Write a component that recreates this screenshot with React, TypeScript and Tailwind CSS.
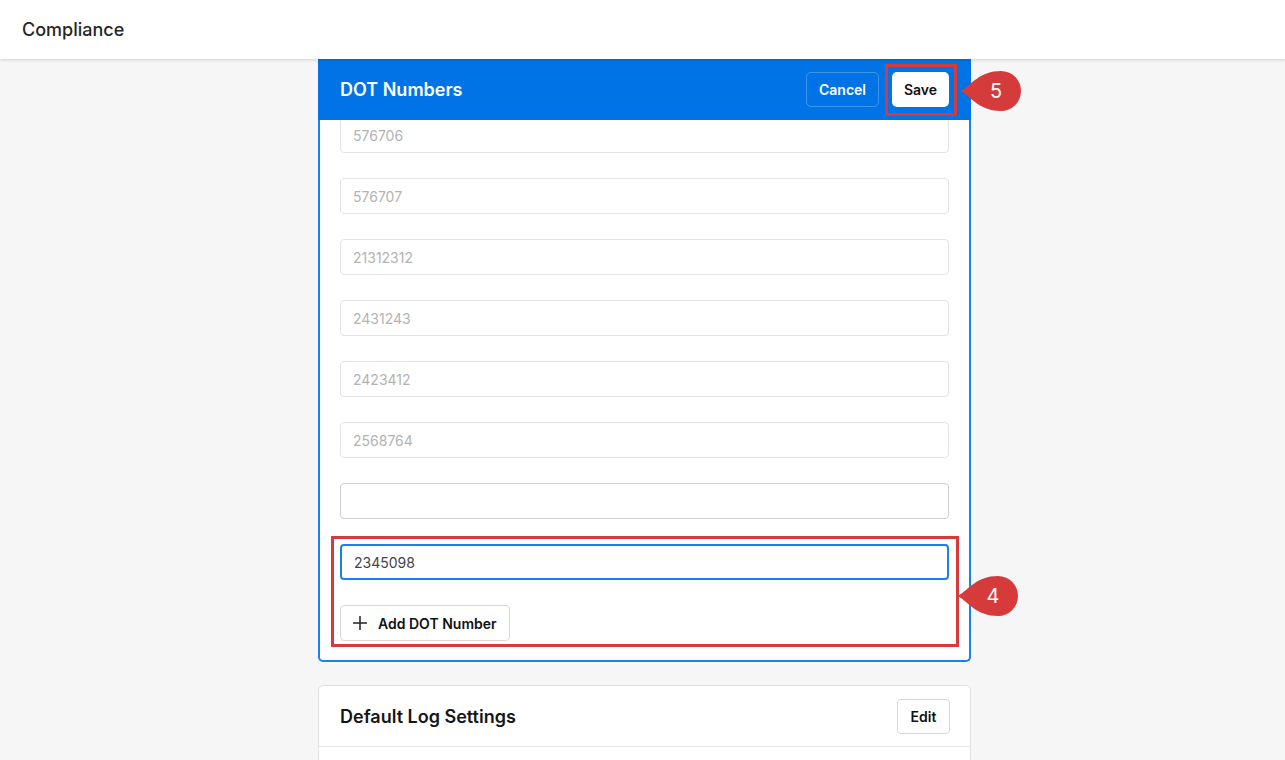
import React from 'react';

const font = { fontFamily: 'Inter, "Noto Sans", sans-serif' };

const savedNumbers = ['576706', '576707', '21312312', '2431243', '2423412', '2568764'];

const Marker: React.FC<{ label: string; className: string }> = ({ label, className }) => (
  <div className={`absolute w-[62px] h-[42px] ${className}`}>
    <svg width="62" height="42" viewBox="0 0 62 42" className="absolute inset-0">
      <path
        d="M1 21 C 12 14, 20 1, 41 1 A20 20 0 1 1 41 41 C 20 41, 12 28, 1 21 Z"
        fill="#d63b3b"
      />
    </svg>
    <span className="absolute left-[17px] w-[38px] top-0 h-[42px] flex items-center justify-center text-white text-[20px]">
      {label}
    </span>
  </div>
);

const App: React.FC = () => {
  return (
    <div className="min-h-[760px] bg-[#f6f6f6] overflow-hidden" style={font}>
      <header className="h-[59px] bg-white flex items-center px-[22px] shadow-[0_1px_3px_rgba(0,0,0,0.15)] relative z-10">
        <h1 className="text-[18px] font-medium text-[#262626]">Compliance</h1>
      </header>

      <div className="w-[653px] ml-[318px]">
        <section className="bg-white border-2 border-t-0 border-[#1a7ff0] rounded-b-[5px]">
          <div className="h-[61px] -mx-[2px] bg-[#0073e6] flex items-center justify-between pl-[22px] pr-[22px] relative z-[5]">
            <h2 className="text-[18px] font-semibold text-white">DOT Numbers</h2>
            <div className="flex items-center gap-[13px]">
              <button className="h-[35px] w-[73px] rounded-[5px] border border-white/25 text-white text-[14px] font-semibold">
                Cancel
              </button>
              <div className="relative">
                <button className="h-[35px] w-[57px] rounded-[5px] bg-white text-[#111] text-[14px] font-semibold">
                  Save
                </button>
                <div className="absolute -left-[7px] -top-[8px] w-[72px] h-[52px] border-[3px] border-[#d63b3b] pointer-events-none" />
                <Marker label="5" className="left-[68px] -top-[2px]" />
              </div>
            </div>
          </div>

          <div className="px-5 pb-[19px]">
            <div className="flex flex-col gap-[25px] -mt-[3px]">
              {savedNumbers.map((n) => (
                <div
                  key={n}
                  className="h-9 rounded-[4px] border border-[#e3e3e3] px-3 flex items-center text-[14px] text-[#b3b3b3]"
                >
                  {n}
                </div>
              ))}
              <div className="h-9 rounded-[4px] border border-[#cfcfcf]" />
              <div className="relative flex flex-col gap-[25px]">
                <div className="h-9 rounded-[4px] border-2 border-[#1a7ff0] px-3 flex items-center text-[14px] text-[#444]">
                  2345098
                </div>
                <button className="self-start h-9 w-[170px] rounded-[4px] border border-[#d9d9d9] flex items-center gap-[10px] pl-[11px] text-[14px] font-semibold text-[#111]">
                  <svg width="16" height="16" viewBox="0 0 16 16" fill="none" stroke="#222" strokeWidth="1.5">
                    <path d="M8 1v14M1 8h14" />
                  </svg>
                  Add DOT Number
                </button>
                <div className="absolute -left-[9px] -top-[8px] w-[628px] h-[111px] border-[3px] border-[#d63b3b] pointer-events-none" />
                <Marker label="4" className="left-[617px] top-[31px]" />
              </div>
            </div>
          </div>
        </section>

        <section className="mt-[23px] bg-white border border-[#e0e0e0] rounded-[5px]">
          <div className="h-[61px] flex items-center justify-between pl-[21px] pr-[20px] border-b border-[#e6e6e6]">
            <h2 className="text-[18px] font-semibold text-[#161616]">Default Log Settings</h2>
            <button className="h-[35px] w-[53px] rounded-[4px] border border-[#d9d9d9] text-[14px] font-semibold text-[#111]">
              Edit
            </button>
          </div>
          <div className="h-[40px]" />
        </section>
      </div>
    </div>
  );
};

export default App;
